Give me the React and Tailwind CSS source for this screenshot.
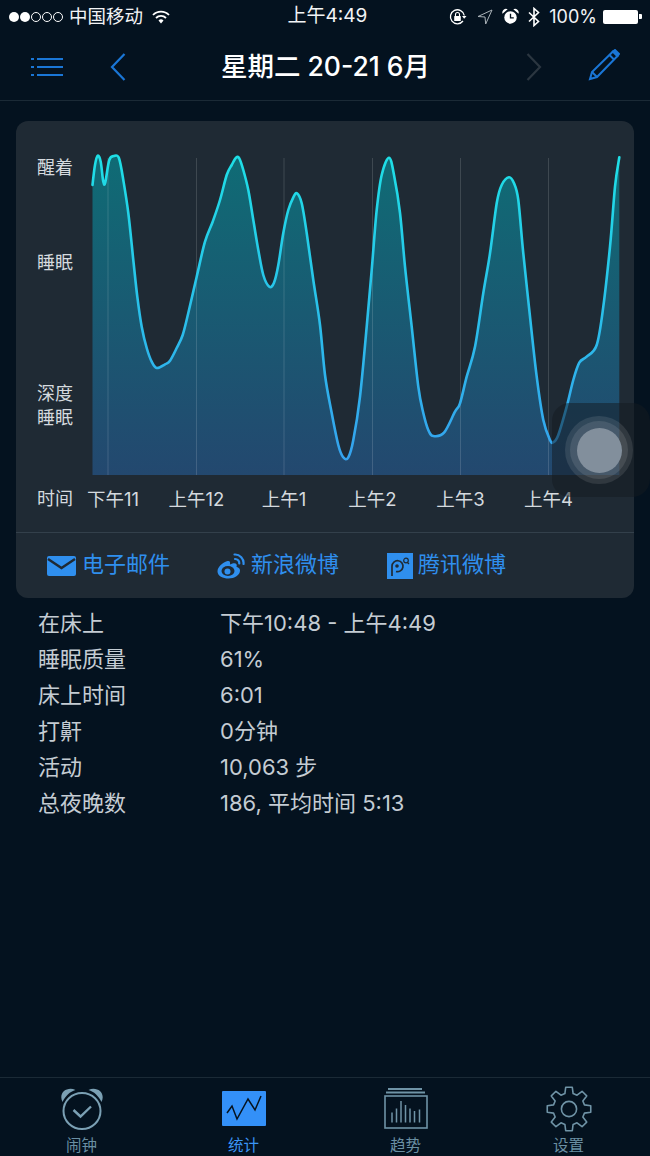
import React from "react";

const FONT = "font-['Inter','Noto_Sans_CJK_SC',sans-serif]";

// curve of the sleep graph, read off the picture
const curve = [
  [92.5, 185], [95, 165], [97.7, 155.7], [100.7, 161.7], [103.3, 181.7], [105.3, 182.3], [109.3, 160], [114, 156], [119, 158.3],
  [123.3, 180], [128.3, 213], [133.3, 260], [137.3, 296.7], [141.7, 326.7], [146.7, 348], [151.7, 361.7], [156.7, 368], [165, 364.3],
  [170, 360.7], [176.7, 348], [182.7, 335], [188.3, 313], [196.7, 276.7], [205, 241.7], [212.7, 221.7], [220, 200], [226.7, 175],
  [231.7, 165], [236, 157.7], [239.3, 158.3], [243.3, 170], [248.3, 190], [253.3, 220], [258.3, 250], [263.3, 275], [269.3, 286.7],
  [274, 282.7], [278.3, 265], [283.3, 233], [288.3, 210], [293.3, 197.3], [297, 193.3], [301.7, 203.3], [306.7, 233], [313.3, 280],
  [320, 325], [325, 375], [331.7, 413], [338.3, 445], [343.3, 457.3], [348.3, 457.3], [353.3, 440], [360, 396.7], [366.7, 326.7],
  [371.7, 270], [376.7, 210], [381.7, 175], [389, 157.7], [394, 175], [400, 213], [405, 266.7], [411.7, 326.7], [418.3, 386.7],
  [423.3, 413], [428.3, 430], [433.3, 436], [444, 432.7], [455, 411.7], [460, 403.3], [466.7, 376.7], [475, 346.7], [483.3, 293],
  [490, 253.3], [496.7, 203.3], [501.7, 185], [509, 177.3], [514, 183.3], [518.3, 200], [523.3, 253.3], [530, 316.7], [536.7, 376.7],
  [543.3, 420], [550, 440], [553.3, 442.3], [558.3, 435], [566.7, 406.7], [573.3, 380], [579.3, 362.7], [586.7, 356.7], [596.7, 345],
  [603.3, 306.7], [610, 246.7], [615, 186.7], [619.3, 157.3],
].map(([x, y]) => [x - 16, y - 121]);

// catmull-rom through the points so the line stays round
const smoothPath = (pts) => {
  let d = `M${pts[0][0]} ${pts[0][1]}`;
  for (let i = 0; i < pts.length - 1; i++) {
    const p0 = pts[i - 1] || pts[i];
    const p1 = pts[i];
    const p2 = pts[i + 1];
    const p3 = pts[i + 2] || p2;
    const c1 = [p1[0] + (p2[0] - p0[0]) / 6, p1[1] + (p2[1] - p0[1]) / 6];
    const c2 = [p2[0] - (p3[0] - p1[0]) / 6, p2[1] - (p3[1] - p1[1]) / 6];
    d += ` C${c1[0].toFixed(1)} ${c1[1].toFixed(1)} ${c2[0].toFixed(1)} ${c2[1].toFixed(1)} ${p2[0]} ${p2[1]}`;
  }
  return d;
};

const linePath = smoothPath(curve);
const areaPath = `${linePath} L603.3 354 L76.5 354 Z`;

const gridLines = [108, 196.5, 284, 372.5, 460.5, 548.5];
const xLabels = ["上午12", "上午1", "上午2", "上午3", "上午4"];

const details = [
  ["在床上", "下午10:48 - 上午4:49"],
  ["睡眠质量", "61%"],
  ["床上时间", "6:01"],
  ["打鼾", "0分钟"],
  ["活动", "10,063 步"],
  ["总夜晚数", "186, 平均时间 5:13"],
];

// 8 tooth gear outline, tooth straight up
const gearPath = (() => {
  const cx = 23;
  const cy = 23;
  const pt = (r, a) => `${(cx + r * Math.sin(a)).toFixed(2)} ${(cy - r * Math.cos(a)).toFixed(2)}`;
  const step = Math.PI / 4;
  let d = "";
  for (let i = 0; i < 8; i++) {
    const a = i * step;
    d += `${i ? "L" : "M"}${pt(16, a - 0.26)} L${pt(22, a - 0.15)} L${pt(22, a + 0.15)} L${pt(16, a + 0.26)} `;
  }
  return d + "Z";
})();

const SleepChart = () => (
  <svg width="619" height="354" className="absolute left-0 top-0">
    <defs>
      <linearGradient id="fillGrad" gradientUnits="userSpaceOnUse" x1="0" y1="30" x2="0" y2="354">
        <stop offset="0" stopColor="#0f6c75" />
        <stop offset="1" stopColor="#23486f" />
      </linearGradient>
      <linearGradient id="lineGrad" gradientUnits="userSpaceOnUse" x1="0" y1="30" x2="0" y2="340">
        <stop offset="0" stopColor="#1ee0e6" />
        <stop offset="1" stopColor="#35a2ee" />
      </linearGradient>
    </defs>
    <path d={areaPath} fill="url(#fillGrad)" />
    {gridLines.map((x) => (
      <line key={x} x1={x - 16} x2={x - 16} y1="37" y2="354" stroke="#ffffff" strokeOpacity="0.14" />
    ))}
    <path d={linePath} fill="none" stroke="url(#lineGrad)" strokeWidth="2.6" strokeLinejoin="round" strokeLinecap="round" />
  </svg>
);

const StatusBar = () => (
  <div className="flex h-[33px] items-center justify-between pl-[9px] pr-[8px] text-[#f2f4f6]">
    <div className="flex w-[200px] items-center">
      <div className="flex items-center gap-[1px]">
        <span className="h-[10px] w-[10px] rounded-full bg-white" />
        <span className="h-[10px] w-[10px] rounded-full bg-white" />
        <span className="h-[10px] w-[10px] rounded-full border border-white" />
        <span className="h-[10px] w-[10px] rounded-full border border-white" />
        <span className="h-[10px] w-[10px] rounded-full border border-white" />
      </div>
      <span className="ml-[6px] text-[18.5px]">中国移动</span>
      <svg width="18" height="14" viewBox="0 0 18 14" className="ml-[9px]">
        <path d="M1 5 A11 11 0 0 1 17 5" fill="none" stroke="#fff" strokeWidth="1.8" />
        <path d="M4 8 A7 7 0 0 1 14 8" fill="none" stroke="#fff" strokeWidth="1.8" />
        <path d="M6.5 10.5 A3.6 3.6 0 0 1 11.5 10.5 L9 13.5 Z" fill="#fff" />
      </svg>
    </div>
    <span className="text-[19px]">上午4:49</span>
    <div className="flex w-[196px] items-center justify-end">
      <svg width="18" height="18" viewBox="0 0 18 18">
        <path d="M14 13 A7 7 0 1 1 15.3 7.5" fill="none" stroke="#fff" strokeWidth="1.3" />
        <path d="M13 8 L17.5 8 L15.2 10.8 Z" fill="#fff" />
        <rect x="5.2" y="8" width="6.6" height="5" rx="0.6" fill="#fff" />
        <path d="M6.5 8 V6.5 A2 2 0 0 1 10.5 6.5 V8" fill="none" stroke="#fff" strokeWidth="1.1" />
      </svg>
      <svg width="16" height="16" viewBox="0 0 16 16" className="ml-[10px]">
        <path d="M15 1 L1 7.5 L8 8 L8.7 15 Z" fill="none" stroke="#aab2b8" strokeWidth="1" strokeLinejoin="round" />
      </svg>
      <svg width="17" height="17" viewBox="0 0 18 18" className="ml-[9px]">
        <circle cx="9" cy="10" r="6.6" fill="#fff" />
        <path d="M0.5 6 A4 4 0 0 1 6 1.2 Z M17.5 6 A4 4 0 0 0 12 1.2 Z" fill="#fff" />
        <path d="M9 6 V10.5 H12.5" fill="none" stroke="#06131f" strokeWidth="1.4" />
      </svg>
      <svg width="12" height="20" viewBox="0 0 12 20" className="ml-[9px]">
        <path d="M1 5.5 L10.5 14.5 L6 18.5 V1.5 L10.5 5.5 L1 14.5" fill="none" stroke="#fff" strokeWidth="1.6" />
      </svg>
      <span className="ml-[9px] text-[18px]">100%</span>
      <div className="ml-[6px] flex items-center">
        <div className="h-[14px] w-[35px] rounded-[2px] bg-white" />
        <div className="ml-[1px] h-[5px] w-[3px] rounded-r-[1px] bg-white" />
      </div>
    </div>
  </div>
);

const Header = () => (
  <div className="flex h-[68px] items-center justify-between border-b border-[#1b2a36] pl-[31px] pr-[30px]">
    <div className="flex w-[150px] items-center">
      <svg width="32" height="20" viewBox="0 0 32 20" stroke="#1a76d6" strokeWidth="2">
        <path d="M6 2 H32 M6 10 H32 M6 18 H32" />
        <path d="M0 2 H3 M0 10 H3 M0 18 H3" />
      </svg>
      <svg width="16" height="28" viewBox="0 0 16 28" className="ml-[47px]" fill="none" stroke="#1a76d6" strokeWidth="2.2">
        <path d="M14.5 1 L2 14 L14.5 27" />
      </svg>
    </div>
    <span className="text-[26.5px] font-medium text-white">星期二 20-21 6月</span>
    <div className="flex w-[150px] items-center justify-end">
      <svg width="16" height="28" viewBox="0 0 16 28" fill="none" stroke="#2b3640" strokeWidth="2.2">
        <path d="M1.5 1 L14 14 L1.5 27" />
      </svg>
      <svg width="32" height="32" viewBox="0 0 32 32" className="ml-[46px] -mt-[3px]" fill="none" stroke="#1a76d6" strokeWidth="2">
        <path d="M25 2.5 L29.5 7 L9 28 L2 30 L4 23 Z" />
        <path d="M21.5 6 L26 10.5" />
        <path d="M25 2.5 L27 1 L31 5 L29.5 7 Z" fill="#1a76d6" />
        <path d="M4 23 L9 28" />
      </svg>
    </div>
  </div>
);

const ShareLink = ({ icon, label, className }) => (
  <div className={`flex items-center ${className}`}>
    {icon}
    <span className="-mt-[2px] text-[22px] text-[#2f8fee]">{label}</span>
  </div>
);

const TabItem = ({ icon, label, active }) => (
  <div className="flex flex-col items-center">
    <div className="mt-[2px] flex h-[57px] items-center justify-center">{icon}</div>
    <span className={`text-[15.5px] leading-[18px] ${active ? "text-[#3b95f5]" : "text-[#6a8fa3]"}`}>{label}</span>
  </div>
);

export default function App() {
  return (
    <div className={`relative h-[1156px] w-[650px] overflow-hidden bg-[#04121f] ${FONT}`}>
      <StatusBar />
      <Header />

      <div className="mx-[16px] mt-[20px] rounded-[12px] bg-[#1f2a34]">
        <div className="relative h-[411px] text-[18.5px] leading-[24px] text-[#d5dadf]">
          <SleepChart />
          <div className="absolute left-[21px] top-[35px] text-[18px]">醒着</div>
          <div className="absolute left-[21px] top-[130px] text-[18px]">睡眠</div>
          <div className="absolute left-[21px] top-[261px] text-[18px]">
            深度<br />睡眠
          </div>
          <div className="absolute left-[21px] top-[366px] text-[18px]">时间</div>
          <div className="absolute left-[71px] top-[366px]">下午11</div>
          {xLabels.map((label, i) => (
            <div
              key={label}
              className="absolute top-[366px] w-[80px] -translate-x-1/2 text-center"
              style={{ left: gridLines[i + 1] - 16 }}
            >
              {label}
            </div>
          ))}
        </div>
        <div className="flex h-[66px] items-center border-t border-[#33404b] pl-[31px]">
          <ShareLink
            className="w-[170px] gap-[6px]"
            label="电子邮件"
            icon={
              <svg width="29" height="20" viewBox="0 0 29 20">
                <rect width="29" height="20" rx="2" fill="#2f8fee" />
                <path d="M1 3 L14.5 12 L28 3" fill="none" stroke="#1f2a34" strokeWidth="2.4" />
              </svg>
            }
          />
          <ShareLink
            className="w-[170px] gap-[6px]"
            label="新浪微博"
            icon={
              <svg width="28" height="26" viewBox="0 0 28 26">
                <path d="M10.5 8 C5 10 0.5 14 0.5 18.5 C0.5 23 6 25.5 11.5 25.5 C17.5 25.5 23 22 23 17.5 C23 15 20.5 14.2 19.5 14 C20.5 11.5 19 9.5 15.5 10.5 L13 11.5 C13.5 8.5 12.5 7.5 10.5 8 Z" fill="#2f8fee" />
                <ellipse cx="11" cy="18" rx="6.5" ry="5" fill="#1f2a34" />
                <circle cx="10.5" cy="18.5" r="3" fill="#2f8fee" />
                <path d="M17.5 1.5 A8.5 8.5 0 0 1 26.5 11" fill="none" stroke="#2f8fee" strokeWidth="2.2" strokeLinecap="round" />
                <path d="M18 6 A4.2 4.2 0 0 1 22.3 10.5" fill="none" stroke="#2f8fee" strokeWidth="2.2" strokeLinecap="round" />
              </svg>
            }
          />
          <ShareLink
            className="gap-[5px]"
            label="腾讯微博"
            icon={
              <svg width="26" height="26" viewBox="0 0 26 26">
                <rect width="26" height="26" fill="#2f8fee" />
                <path d="M5 23 V13 A5.5 5.5 0 1 1 9 18.5" fill="none" stroke="#1f2a34" strokeWidth="1.7" />
                <circle cx="10" cy="13" r="1.8" fill="#1f2a34" />
                <circle cx="19" cy="7.5" r="2.3" fill="none" stroke="#1f2a34" strokeWidth="1.2" />
                <path d="M20.5 9.5 L22 11" stroke="#1f2a34" strokeWidth="1.2" />
              </svg>
            }
          />
        </div>
      </div>

      <div className="ml-[38px] mt-[7px] flex flex-col text-[22px] leading-[36px] text-[#c4ccd3]">
        {details.map(([name, value]) => (
          <div key={name} className="flex">
            <span className="w-[182px]">{name}</span>
            <span>{value}</span>
          </div>
        ))}
      </div>

      <div className="absolute bottom-0 left-0 right-0 grid h-[79px] grid-cols-[163px_161px_163px_163px] justify-items-center border-t border-[#1b2a36]">
        <TabItem
          label="闹钟"
          icon={
            <svg width="44" height="44" viewBox="0 0 44 44" fill="none">
              <path d="M2.5 15 C-2 6 7 -1 15.5 3 C10 4.5 5.5 9 2.5 15 Z M41.5 15 C46 6 37 -1 28.5 3 C34 4.5 38.5 9 41.5 15 Z" fill="#7ba0b4" />
              <ellipse cx="22" cy="24" rx="18.5" ry="18" stroke="#7ba0b4" strokeWidth="2" />
              <path d="M13.5 23 L20.5 29.5 L31 19.5" stroke="#7ba0b4" strokeWidth="2.4" />
            </svg>
          }
        />
        <TabItem
          active
          label="统计"
          icon={
            <svg width="44" height="35" viewBox="0 0 44 35">
              <rect width="44" height="35" rx="1" fill="#3390f8" />
              <path d="M5 22 L10 15 L15 28 L26 8 L33 19 L39 5" fill="none" stroke="#06131f" strokeWidth="1.5" />
            </svg>
          }
        />
        <TabItem
          label="趋势"
          icon={
            <svg width="44" height="41" viewBox="0 0 44 41" fill="none" stroke="#6f93a6">
              <path d="M4 1 H38 M2 4.5 H41" strokeWidth="1.8" />
              <rect x="1" y="8" width="42" height="32" strokeWidth="1.6" />
              <path d="M8 34.5 V24.5 M12.5 34.5 V20.5 M17 34.5 V13 M21.5 34.5 V17 M26 34.5 V20.5 M30.5 34.5 V23 M35.5 34.5 V21.5" strokeWidth="1.5" />
            </svg>
          }
        />
        <TabItem
          label="设置"
          icon={
            <svg width="46" height="46" viewBox="0 0 46 46" fill="none" stroke="#6f93a6" strokeWidth="1.6" strokeLinejoin="round">
              <circle cx="23" cy="23" r="7.6" />
              <path d={gearPath} />
            </svg>
          }
        />
      </div>

      {/* assistive touch button floating over the chart */}
      <div className="absolute left-[552px] top-[403px] flex h-[94px] w-[98px] items-center justify-start rounded-[18px] bg-[#141a20]/50 pl-[13px]">
        <div className="flex h-[68px] w-[68px] items-center justify-center rounded-full bg-white/10">
          <div className="flex h-[58px] w-[58px] items-center justify-center rounded-full bg-white/10">
            <div className="h-[45px] w-[45px] rounded-full bg-[#828f9c]" />
          </div>
        </div>
      </div>
    </div>
  );
}
